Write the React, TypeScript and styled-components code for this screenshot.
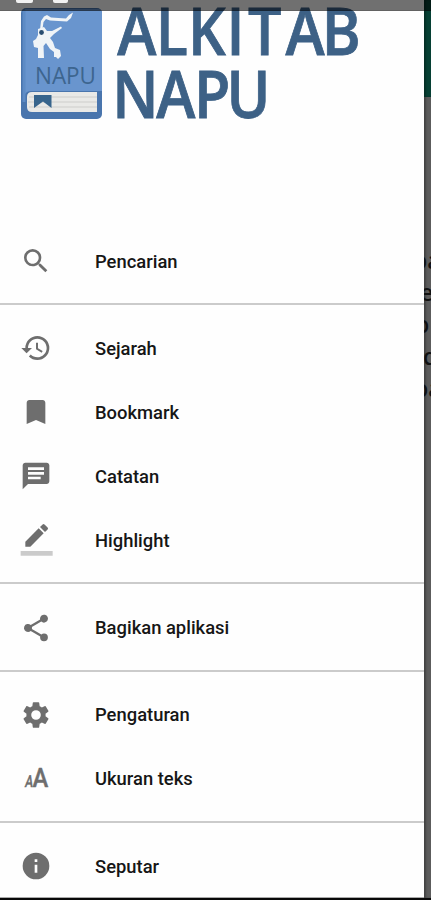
import React from 'react';
import styled, { createGlobalStyle } from 'styled-components';

const GlobalStyle = createGlobalStyle`
  * { box-sizing: border-box; }
  body { margin: 0; background: #5c5c5c; font-family: Roboto, "Liberation Sans", sans-serif; }
`;

const Screen = styled.div`
  position: relative;
  display: flex;
  width: 431px;
  height: 900px;
  overflow: hidden;
  border-bottom: 2px solid #080808;
`;

const Drawer = styled.nav`
  flex: 0 0 424px;
  display: flex;
  flex-direction: column;
  background: #fefefe;
  border-bottom: 1px solid #aaa;
`;

const Header = styled.header`
  height: 229px;
  flex: none;
`;

const Row = styled.div`
  display: flex;
  align-items: center;
  flex: none;
  height: 64px;
  padding-left: 20px;
  gap: 43px;
`;

const Icon = styled.svg`
  width: 32px;
  height: 32px;
  flex: none;
  fill: #6e6e6e;
  overflow: visible;
`;

const Label = styled.span`
  padding-top: 1px;
  font-size: 18.4px;
  font-weight: 500;
  line-height: 24px;
  color: #161616;
  white-space: nowrap;
`;

const Divider = styled.hr`
  flex: none;
  width: 100%;
  height: 2px;
  margin: 10px 0 11.3px;
  border: 0;
  background: #cbcbcb;
`;

const Backdrop = styled.div`
  flex: 1;
  display: flex;
  flex-direction: column;
  overflow: hidden;
  background: #5c5c5c;
  box-shadow: inset 2px 0 2px rgba(0, 0, 0, 0.28);
`;

const Toolbar = styled.div`
  height: 97px;
  flex: none;
  background: #064034;
  box-shadow: inset 2px 0 2px rgba(0, 0, 0, 0.28);
`;

const Passage = styled.div`
  display: flex;
  flex-direction: column;
  margin-top: 147px;
  font: 500 23px/32px "Noto Sans", sans-serif;
  color: #111;
  white-space: nowrap;
`;

const Line = styled.span<{ $shift: number }>`
  margin-left: ${(p) => p.$shift}px;
`;

const StatusBar = styled.div`
  position: absolute;
  top: 0;
  left: 0;
  right: 0;
  height: 11px;
  display: flex;
  padding-left: 16px;
  gap: 20px;
  background: rgba(0, 0, 0, 0.56);
  border-bottom: 1px solid rgba(0, 0, 0, 0.12);
`;

const Notice = styled.span<{ $w: number }>`
  width: ${(p) => p.$w}px;
  height: 3px;
  background: #f2f2f2;
  border-radius: 0 0 2px 2px;
`;

const Logo = () => (
  <svg width="424" height="130" viewBox="0 0 424 130" role="img" aria-label="Alkitab Napu">
    <rect x="21" y="8" width="81" height="111" rx="5" fill="#4975ad" />
    <path d="M27 9H98Q102 9 102 13V91H31Q27 91 25 94V9Z" fill="#6995ce" />
    <path d="M24 10V102" stroke="#5d8bc5" strokeWidth="3" />
    <path d="M32 92H97V112H32Q27 112 27 107V97Q27 92 32 92Z" fill="#e9e9e7" />
    <path d="M29 97H97M28 102H97M29 107H97" stroke="#cdcdcc" strokeWidth="1.2" />
    <path d="M34 95H51.5V108L43 101.5L34 108Z" fill="#37648c" />
    <g fill="#f0f4f7">
      <path d="M40 30L41 21L44 16.5L47 15L51 17.5L66 18.5L69 15L73 12.5L71 18L67 21.5L50 20.5L46 19L43.5 22L42.5 29Z" />
      <path d="M38 29L44 27L47 31L52 31L61 26.5L62 28L54 34L50 38L53 42L55 48L60 50L61 56L58 59L56 57L54 57L54 52L50 49L46 43L43.5 46L44 58H38L38 48L34 47L33 41L36 39L38 35Z" />
    </g>
    <circle cx="41.5" cy="32.5" r="2.4" fill="#294d70" />
    <text x="35" y="84" fontFamily="Open Sans, Noto Sans, sans-serif" fontSize="24" fontWeight="500" textLength="61" lengthAdjust="spacingAndGlyphs" fill="#3d658f">NAPU</text>
    <g transform="scale(.91 1)" fontFamily="Open Sans, Noto Sans, sans-serif" fontWeight="650" fontSize="65" fill="#3d6186" stroke="#3d6186" strokeWidth=".8">
      <text y="54.7" x="128.8 171.2 206.5 249 272.5 313.8 353.5">ALKITAB</text>
      <text y="117.7" x="123.3 171.6 213.3 248.8">NAPU</text>
    </g>
  </svg>
);

const icons: Record<string, React.ReactNode> = {
  search: <path d="M15.5 14h-.79l-.28-.27A6.471 6.471 0 0 0 16 9.5 6.5 6.5 0 1 0 9.5 16c1.61 0 3.09-.59 4.23-1.57l.27.28v.79l5 4.99L20.49 19l-4.99-5zm-6 0C7.01 14 5 11.99 5 9.5S7.01 5 9.5 5 14 7.01 14 9.5 11.99 14 9.5 14z" />,
  history: <path d="M13 3a9 9 0 0 0-9 9H1l3.89 3.89.07.14L9 12H6c0-3.87 3.13-7 7-7s7 3.13 7 7-3.13 7-7 7c-1.93 0-3.68-.79-4.94-2.06l-1.42 1.42A8.954 8.954 0 0 0 13 21a9 9 0 0 0 0-18zm-1 5v5l4.28 2.54.72-1.21-3.5-2.08V8H12z" />,
  bookmark: <path d="M17 3H7c-1.1 0-1.99.9-1.99 2L5 21l7-3 7 3V5c0-1.1-.9-2-2-2z" />,
  note: <path d="M20 2H4c-1.1 0-1.99.9-1.99 2L2 22l4-4h14c1.1 0 2-.9 2-2V4c0-1.1-.9-2-2-2zM15.5 14.5H6v-2h9.5v2zM18 11H6V9h12v2zm0-3.5H6v-2h12v2z" />,
  highlight: (
    <>
      <path d="M17.75 7 14 3.25l-10 10V17h3.75l10-10zm2.96-2.96a1 1 0 0 0 0-1.41L18.37.29a1 1 0 0 0-1.41 0L15 2.25 18.75 6l1.96-1.96z" />
      <path d="M.5 20.2h24v3.6h-24z" fill="#cbcbcb" />
    </>
  ),
  share: <path d="M18 16.08c-.76 0-1.44.3-1.96.77L8.91 12.7c.05-.23.09-.46.09-.7s-.04-.47-.09-.7l7.05-4.11A2.99 2.99 0 1 0 15 5c0 .24.04.47.09.7L8.04 9.81A3 3 0 1 0 6 15c.79 0 1.5-.31 2.04-.81l7.12 4.16c-.05.21-.08.43-.08.65A2.92 2.92 0 1 0 18 16.08z" />,
  settings: <path d="M19.14 12.94c.04-.3.06-.61.06-.94 0-.32-.02-.64-.07-.94l2.03-1.58c.18-.14.23-.41.12-.61l-1.92-3.32a.488.488 0 0 0-.59-.22l-2.39.96c-.5-.38-1.03-.7-1.62-.94l-.36-2.54a.484.484 0 0 0-.48-.41h-3.84c-.24 0-.43.17-.47.41l-.36 2.54c-.59.24-1.13.57-1.62.94l-2.39-.96c-.22-.08-.47 0-.59.22L2.74 8.87c-.12.21-.08.47.12.61l2.03 1.58c-.05.3-.09.63-.09.94s.02.64.07.94l-2.03 1.58c-.18.14-.23.41-.12.61l1.92 3.32c.12.22.37.29.59.22l2.39-.96c.5.38 1.03.7 1.62.94l.36 2.54c.05.24.24.41.48.41h3.84c.24 0 .44-.17.47-.41l.36-2.54c.59-.24 1.13-.56 1.62-.94l2.39.96c.22.08.47 0 .59-.22l1.92-3.32c.12-.22.07-.47-.12-.61l-2.01-1.58zM12 15.6A3.6 3.6 0 1 1 12 8.4a3.6 3.6 0 0 1 0 7.2z" />,
  textSize: (
    <g fontFamily="Roboto, sans-serif" fontWeight="500">
      <text x="5.9" y="18" fontSize="12.5" textLength="6" lengthAdjust="spacingAndGlyphs" transform="skewX(-8)" stroke="#6e6e6e" strokeWidth=".3">A</text>
      <text x="9.3" y="18" fontSize="19" textLength="11.8" lengthAdjust="spacingAndGlyphs" stroke="#6e6e6e" strokeWidth=".3">A</text>
    </g>
  ),
  info: <path d="M12 2a10 10 0 1 0 0 20 10 10 0 0 0 0-20zm1 15h-2v-6h2v6zm0-8h-2V7h2v2z" />,
};

const groups = [
  [{ icon: 'search', label: 'Pencarian' }],
  [
    { icon: 'history', label: 'Sejarah' },
    { icon: 'bookmark', label: 'Bookmark' },
    { icon: 'note', label: 'Catatan' },
    { icon: 'highlight', label: 'Highlight' },
  ],
  [{ icon: 'share', label: 'Bagikan aplikasi' }],
  [
    { icon: 'settings', label: 'Pengaturan' },
    { icon: 'textSize', label: 'Ukuran teks' },
  ],
  [{ icon: 'info', label: 'Seputar' }],
];

const passage = [
  { text: 'pa', shift: -11 },
  { text: 'e', shift: -4 },
  { text: 'p', shift: -9 },
  { text: 'd', shift: -1 },
  { text: 'pa', shift: -10 },
];

export default function App() {
  return (
    <>
      <GlobalStyle />
      <Screen>
        <Drawer>
          <Header><Logo /></Header>
          {groups.map((group, i) => (
            <React.Fragment key={i}>
              {i > 0 && <Divider />}
              {group.map((item) => (
                <Row key={item.label}>
                  <Icon viewBox="0 0 24 24">{icons[item.icon]}</Icon>
                  <Label>{item.label}</Label>
                </Row>
              ))}
            </React.Fragment>
          ))}
        </Drawer>
        <Backdrop>
          <Toolbar />
          <Passage>
            {passage.map((line, i) => (
              <Line key={i} $shift={line.shift}>{line.text}</Line>
            ))}
          </Passage>
        </Backdrop>
        <StatusBar>
          <Notice $w={17} />
          <Notice $w={15} />
        </StatusBar>
      </Screen>
    </>
  );
}
